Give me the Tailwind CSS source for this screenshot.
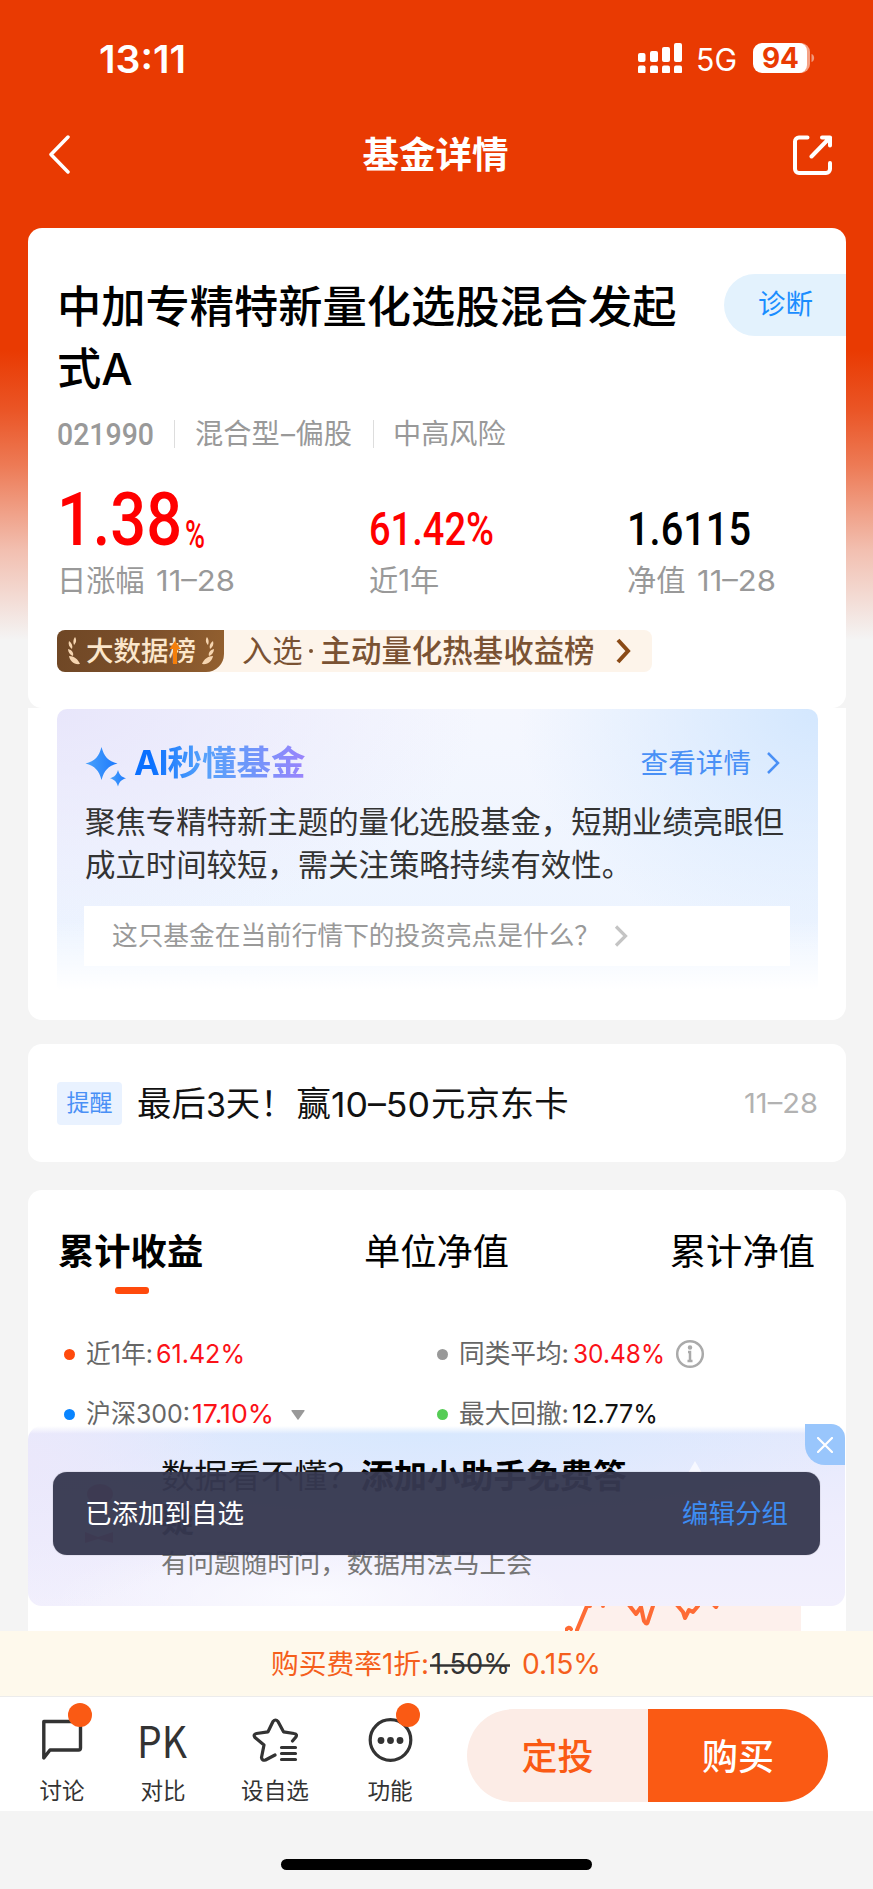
<!DOCTYPE html>
<html lang="zh-CN">
<head>
<meta charset="utf-8">
<title>基金详情</title>
<script src="https://cdn.jsdelivr.net/npm/@tailwindcss/browser@4"></script>
</head>
<body class="bg-[#f4f4f4]">
<div class="relative flex h-[1889px] w-[873px] flex-col overflow-hidden bg-[#f4f4f4] font-['Inter','Noto_Sans_CJK_SC',sans-serif] text-[#111]">
  <main class="h-[1631px] w-full shrink-0 overflow-hidden bg-[linear-gradient(180deg,#e93a02_0px,#e93a02_350px,#ea5526_410px,#ed7a55_465px,#f2bfb0_550px,#f4f4f4_640px)]">
    <!-- status bar -->
    <div class="flex h-[116px] items-center justify-between pl-[100px] pr-[59px]">
      <svg class="h-[40px] w-[88px] overflow-visible" viewBox="0 0 88 40"><text x="-1" y="34.500" textLength="87" lengthAdjust="spacingAndGlyphs" class="fill-white text-[38px] font-semibold">13:11</text></svg>
      <div class="flex items-center">
        <svg class="h-[30px] w-[45px]" viewBox="0 0 45 30" fill="#fff"><rect x="0" y="10" width="7.5" height="9" rx="2"/><rect x="12" y="8" width="8" height="11" rx="2"/><rect x="24" y="4" width="8" height="15" rx="2"/><rect x="36" y="0" width="8" height="19" rx="2"/><rect x="0" y="22.500" width="7.500" height="8" rx="2"/><rect x="12" y="22.500" width="8" height="8" rx="2"/><rect x="24" y="22.500" width="8" height="8" rx="2"/><rect x="36" y="22.500" width="8" height="8" rx="2"/></svg>
        <svg class="ml-[13px] h-[30px] w-[42px] overflow-visible" viewBox="0 0 42 30"><text x="0" y="27.500" textLength="41" lengthAdjust="spacingAndGlyphs" class="fill-white text-[31px]">5G</text></svg>
        <svg class="ml-[15px] mr-[-1px] h-[30px] w-[62px] overflow-visible" viewBox="0 0 62 30"><rect x="3" width="54" height="30" rx="9" fill="#f5a184"/><path d="M9 0H46a8 8 0 0 1 8 8V22a8 8 0 0 1-8 8H9a9 9 0 0 1-9-9V9a9 9 0 0 1 9-9z" fill="#fff"/><path d="M58.500 11c3.500 1 3.500 7 0 8z" fill="#f19a7d"/><text x="9" y="25" textLength="37" lengthAdjust="spacingAndGlyphs" class="fill-[#e93a02] text-[28px] font-bold">94</text></svg>
      </div>
    </div>
    <!-- title bar -->
    <header class="flex h-[112px] items-start justify-between pl-[48px] pr-[40px] pt-[19px]">
      <svg class="h-[40px] w-[39px]" viewBox="0 0 39 40" fill="none" stroke="#fff" stroke-width="3.500" stroke-linecap="round" stroke-linejoin="round"><path d="M20 2 3 19.500 20 37"/></svg>
      <h1 class="-ml-[9px] text-[36.500px] leading-[40px] font-bold text-white">基金详情</h1>
      <svg class="h-[40px] w-[40px]" viewBox="0 0 40 40" fill="none" stroke="#fff" stroke-width="4" stroke-linecap="round" stroke-linejoin="round"><path d="M14.500 2.500H6a4 4 0 0 0-4 4V34a4 4 0 0 0 4 4H33a4 4 0 0 0 4-4V28M29 2.500h8v8M37 2.500 18.500 21.500"/></svg>
    </header>

    <div class="mx-[28px] w-[818px]">
      <!-- fund summary -->
      <section class="h-[480px] rounded-[14px] bg-white pt-[46px]">
        <div class="flex h-[124px] items-start justify-between pl-[29px]">
          <h2 class="mt-[2px] w-[640px] text-[44.250px] leading-[62px] font-medium text-black">中加专精特新量化选股混合发起式A</h2>
          <div class="flex h-[62px] w-[122px] items-center rounded-l-full bg-[#e3f2fd] pl-[34px] text-[27.500px] text-[#1a8dff]">诊断</div>
        </div>
        <div class="mt-[18px] flex h-[36px] items-center pl-[29px] text-[28.200px] leading-[36px] text-[#999]">
          <svg class="h-[36px] w-[98px] overflow-visible" viewBox="0 0 98 36"><text x="0" y="29" textLength="97" lengthAdjust="spacingAndGlyphs" class="fill-[#999] font-[Roboto] text-[32px] font-medium">021990</text></svg>
          <i class="ml-[19px] h-[28px] w-px bg-[#ddd]"></i>
          <span class="ml-[20px] flex">混合型<svg class="h-[36px] w-[16px]" viewBox="0 0 16 36"><text x="1" y="28" textLength="14" lengthAdjust="spacingAndGlyphs" class="fill-[#999]">–</text></svg>偏股</span>
          <i class="ml-[21px] h-[28px] w-px bg-[#ddd]"></i>
          <span class="ml-[19px]">中高风险</span>
        </div>
        <div class="mt-[36px] flex pl-[32px]">
          <div class="w-[309px]">
            <svg class="h-[64px] w-[150px] overflow-visible" viewBox="0 0 150 64"><text x="-3" y="57" textLength="125" lengthAdjust="spacingAndGlyphs" class="fill-[#f00] font-[Roboto] text-[75px] font-medium">1.38</text><text x="125" y="60" textLength="20" lengthAdjust="spacingAndGlyphs" class="fill-[#f00] font-[Roboto] text-[39px] font-medium">%</text></svg>
            <div class="mt-[10px] flex h-[38px] items-center text-[29.200px] text-[#999]"><span class="-ml-[3px]">日涨幅</span><svg class="ml-[11px] h-[38px] w-[80px] overflow-visible" viewBox="0 0 80 38"><text x="0" y="29" textLength="79" lengthAdjust="spacingAndGlyphs" class="fill-[#999] text-[29px]">11–28</text></svg></div>
          </div>
          <div class="w-[259px]">
            <svg class="h-[64px] w-[150px] overflow-visible" viewBox="0 0 150 64"><text x="0" y="57" textLength="125" lengthAdjust="spacingAndGlyphs" class="fill-[#f00] font-[Roboto] text-[46.500px] font-medium">61.42%</text></svg>
            <div class="mt-[10px] flex h-[38px] items-center text-[29.200px] text-[#999]">近<span>1</span>年</div>
          </div>
          <div>
            <svg class="h-[64px] w-[150px] overflow-visible" viewBox="0 0 150 64"><text x="-1" y="57" textLength="124" lengthAdjust="spacingAndGlyphs" class="fill-black font-[Roboto] text-[46.500px] font-medium">1.6115</text></svg>
            <div class="mt-[10px] flex h-[38px] items-center text-[29.200px] text-[#999]"><span class="-ml-px">净值</span><svg class="ml-[12px] h-[38px] w-[80px] overflow-visible" viewBox="0 0 80 38"><text x="0" y="29" textLength="79" lengthAdjust="spacingAndGlyphs" class="fill-[#999] text-[29px]">11–28</text></svg></div>
          </div>
        </div>
        <div class="mt-[30px] ml-[29px] flex h-[42px] w-[595px] items-center rounded-[8px] bg-[#fdf4ea] text-[#7a5233]">
          <div class="relative flex h-[42px] w-[167px] items-center rounded-l-[8px] rounded-br-[18px] bg-[linear-gradient(100deg,#6f4725,#7b4f2b_50%,#93602f)] pl-[10px]">
            <svg class="h-[30px] w-[16px]" viewBox="0 0 16 30" fill="#f6d5b0"><path d="M8 1c2 3 1 6-1 8-1-3-1-5 1-8zM2 5c3 2 4 5 3 8C2 11 1 8 2 5zM1 13c4 1 6 4 5 7-3-1-5-4-5-7zM2 20c5 0 9 3 11 8C7 29 3 25 2 20z"/></svg>
            <span class="ml-[3px] text-[27.500px] leading-[40px] font-medium text-[#fbe6cb]">大数据榜</span>
            <svg class="ml-[3px] h-[30px] w-[16px] -scale-x-100" viewBox="0 0 16 30" fill="#f6d5b0"><path d="M8 1c2 3 1 6-1 8-1-3-1-5 1-8zM2 5c3 2 4 5 3 8C2 11 1 8 2 5zM1 13c4 1 6 4 5 7-3-1-5-4-5-7zM2 20c5 0 9 3 11 8C7 29 3 25 2 20z"/></svg>
            <svg class="absolute left-[111px] top-[11px] h-[24px] w-[14px]" viewBox="0 0 14 24" fill="#f57f0a"><path d="M7 0 12.500 8H9V23H5V8H1.500z"/></svg>
          </div>
          <span class="ml-[18px] text-[30.300px] leading-[40px]">入选</span>
          <i class="ml-[6px] h-[4px] w-[4px] rounded-full bg-[#7a5233]"></i>
          <span class="ml-[8px] text-[30.450px] leading-[40px] font-medium">主动量化热基收益榜</span>
          <svg class="ml-[20px] h-[26px] w-[18px]" viewBox="0 0 18 26" fill="none" stroke="#8a4a16" stroke-width="4"><path d="M3 2 13 13 3 24"/></svg>
        </div>
      </section>

      <!-- AI digest -->
      <section class="h-[312px] rounded-b-[14px] bg-white px-[29px] pt-px">
        <div class="h-[283px] w-[761px] rounded-[10px] bg-[linear-gradient(180deg,rgba(255,255,255,0)_75%,#fff_99%),radial-gradient(ellipse_300px_240px_at_100%_0%,#d3e7fe,rgba(225,239,255,0)),radial-gradient(ellipse_420px_230px_at_0%_0%,#e8e6fb,rgba(240,240,254,0)),linear-gradient(180deg,#f5f7fe,#eaf3ff)] px-[27px] pt-[32px]">
          <div class="flex h-[44px] items-center">
            <svg class="h-[44px] w-[44px] overflow-visible" viewBox="0 0 44 44"><defs><linearGradient id="spark" x1="0" x2="1"><stop offset="0" stop-color="#4aa2fb"/><stop offset="1" stop-color="#1c79fd"/></linearGradient></defs><g fill="url(#spark)"><path d="M17.500 6C20 15.500 24 20 33.500 22.500 24 25 20 29.500 17.500 39 15 29.500 11 25 1.500 22.500 11 20 15 15.500 17.500 6z"/><path d="M34 29c1.500 5 3.500 7 8 8.200-4.500 1.300-6.500 3.300-8 8.300-1.500-5-3.500-7-8-8.300 4.500-1.200 6.500-3.200 8-8.200z"/></g></svg>
            <span class="ml-[6px] bg-[linear-gradient(90deg,#0a70ff_10%,#55a2fb_40%,#6b98fa_65%,#9a84fc)] bg-clip-text text-[34.500px] leading-[44px] font-bold text-transparent"><span class="tracking-[-1px]">AI</span>秒懂基金</span>
            <span class="ml-auto text-[27.600px] leading-[44px] text-[#4990f6]">查看详情</span>
            <svg class="ml-[15px] mr-[11px] h-[24px] w-[14px]" viewBox="0 0 14 24" fill="none" stroke="#4990f6" stroke-width="2.500"><path d="M2 2 12 12 2 22"/></svg>
          </div>
          <p class="mt-[16px] w-[715px] pl-px text-[30.400px] leading-[43px] text-[#333]">聚焦专精特新主题的量化选股基金，短期业绩亮眼但成立时间较短，需关注策略持续有效性。</p>
          <div class="mt-[19px] flex h-[60px] w-[706px] items-center bg-white pl-[28px] text-[25.700px] text-[#999]">这只基金在当前行情下的投资亮点是什么？
            <svg class="ml-[14px] h-[22px] w-[14px]" viewBox="0 0 14 22" fill="none" stroke="#c4c4c4" stroke-width="3.200"><path d="M2 1.500 11.500 11 2 20.500"/></svg>
          </div>
        </div>
      </section>

      <!-- reminder -->
      <section class="mt-[24px] flex h-[118px] items-center rounded-[14px] bg-white pl-[29px] pr-[28px]">
        <span class="flex h-[43px] w-[65px] items-center justify-center rounded-[4px] bg-[#e9f2ff] text-[23px] text-[#4990f6]">提醒</span>
        <span class="ml-[15px] flex items-center pt-[2px] text-[34.400px] leading-[50px]">最后<svg class="h-[50px] w-[20px] overflow-visible" viewBox="0 0 20 50"><text x="0" y="38" textLength="20" lengthAdjust="spacingAndGlyphs" class="fill-[#111] text-[34px]">3</text></svg>天！<span class="ml-[2px]">赢</span><svg class="h-[50px] w-[100px] overflow-visible" viewBox="0 0 100 50"><text x="0" y="38" textLength="99" lengthAdjust="spacingAndGlyphs" class="fill-[#111] text-[34px]">10–50</text></svg>元京东卡</span>
        <svg class="ml-auto h-[40px] w-[74px] overflow-visible" viewBox="0 0 74 40"><text x="0" y="30" textLength="74" lengthAdjust="spacingAndGlyphs" class="fill-[#b2b2b2] text-[27px]">11–28</text></svg>
      </section>

      <!-- performance -->
      <section class="mt-[28px] h-[460px] rounded-t-[14px] bg-white pt-[37px]">
        <div class="flex justify-between pl-[30px] pr-[31px] text-[36.300px] leading-[50px] text-black">
          <div class="flex flex-col items-center"><span class="font-bold">累计收益</span><i class="mt-[10px] ml-[2px] h-[7px] w-[34px] rounded-[3px] bg-[#ff4a0c]"></i></div>
          <span>单位净值</span>
          <span>累计净值</span>
        </div>
        <div class="mt-[30px] grid grid-cols-[373px_1fr] pl-[36px] text-[26px] leading-[60px] text-[#666]">
          <div class="flex items-center"><i class="mr-[11px] h-[11px] w-[11px] rounded-full bg-[#ff4a0c]"></i><svg class="h-[60px] w-[160px] overflow-visible" viewBox="0 0 160 60"><text y="39" textLength="67" lengthAdjust="spacingAndGlyphs" class="fill-[#666]">近1年:</text><text x="70" y="39" textLength="89" lengthAdjust="spacingAndGlyphs" class="fill-[#fb1218]">61.42%</text></svg></div>
          <div class="flex items-center"><i class="mr-[11px] h-[11px] w-[11px] rounded-full bg-[#999]"></i><svg class="h-[60px] w-[206px] overflow-visible" viewBox="0 0 206 60"><text y="39" textLength="110" lengthAdjust="spacingAndGlyphs" class="fill-[#666]">同类平均:</text><text x="114" y="39" textLength="92" lengthAdjust="spacingAndGlyphs" class="fill-[#fb1218]">30.48%</text></svg><svg class="ml-[10px] h-[30px] w-[30px]" viewBox="0 0 30 30" fill="none" stroke="#aaa" stroke-width="2.500"><circle cx="15" cy="15" r="12.800"/><path d="M13 13H15v9M12.500 22h5"/><circle cx="15" cy="8.500" r="1" fill="#aaa"/></svg></div>
          <div class="flex items-center"><i class="mr-[11px] h-[11px] w-[11px] rounded-full bg-[#0a85ff]"></i><svg class="h-[60px] w-[190px] overflow-visible" viewBox="0 0 190 60"><text y="39" textLength="104" lengthAdjust="spacingAndGlyphs" class="fill-[#666]">沪深300:</text><text x="106" y="39" textLength="82" lengthAdjust="spacingAndGlyphs" class="fill-[#fb1218]">17.10%</text></svg><svg class="ml-[15px] mt-[2px] h-[10px] w-[14px]" viewBox="0 0 14 10" fill="#999"><path d="M1 0H13Q14 0 13.500 1L7.500 9.500Q7 10 6.500 9.500L.5 1Q0 0 1 0z"/></svg></div>
          <div class="flex items-center"><i class="mr-[11px] h-[11px] w-[11px] rounded-full bg-[#55cc55]"></i><svg class="h-[60px] w-[206px] overflow-visible" viewBox="0 0 206 60"><text y="39" textLength="110" lengthAdjust="spacingAndGlyphs" class="fill-[#666]">最大回撤:</text><text x="113" y="39" textLength="86" lengthAdjust="spacingAndGlyphs" class="fill-[#111]">12.77%</text></svg></div>
        </div>
        <svg class="mt-[162px] ml-[537px] h-[30px] w-[240px]" viewBox="0 0 240 30"><path d="M12 30 22 0H236V30z" fill="#fdf0ec"/><path d="M1 24Q4 20 6 23M12 24 22 0H25M38-1v1M64-1l7 9 5-7 3 14q3 5 4 0l6-18M112-1l6 7 2 6 4-8 4 2 5-6M149-1l2 2 1-2" fill="none" stroke="#fe6b35" stroke-width="4" stroke-linejoin="round" stroke-linecap="round"/></svg>
      </section>
    </div>
  </main>

  <!-- assistant banner -->
  <aside class="absolute left-[28px] top-[1426px] h-[180px] w-[817px] rounded-[14px] bg-[linear-gradient(180deg,#fff_0px,rgba(255,255,255,0)_8px),radial-gradient(ellipse_200px_150px_at_0%_20%,#ebe8fb,rgba(235,232,251,0)),radial-gradient(ellipse_260px_60px_at_35%_95%,#fafaff,rgba(250,250,255,0)),radial-gradient(ellipse_460px_110px_at_48%_0%,#d7e8fe,rgba(224,235,254,0)),linear-gradient(180deg,#e4e9fd,#eeedfd_50%,#f2f0fd)] pl-[133px] pt-[28px]">
    <p class="text-[33.250px] leading-[44px] whitespace-nowrap text-[#111]">数据看不懂？<b class="font-bold text-black">添加小助手免费答</b></p>
    <b class="block text-[33px] leading-[44px]">疑</b>
    <p class="text-[26.550px] leading-[42px] text-[#777]">有问题随时问，数据用法马上会</p>
    <svg class="absolute left-[52px] top-[50px] h-[70px] w-[40px] opacity-60" viewBox="0 0 40 70" fill="#e0242c"><ellipse cx="20" cy="18" rx="13" ry="10"/><path d="M5 56l13 5 15-5v11l-15-4-13 4z"/></svg>
    <svg class="absolute left-[660px] top-[34px] h-[14px] w-[14px]" viewBox="0 0 16 14" fill="#f7f8ff"><path d="M8 0 16 14H0z"/></svg>
    <div class="absolute -top-[2px] right-0 flex h-[41px] w-[40px] items-center justify-center rounded-tr-[14px] rounded-bl-[20px] bg-[#99c6fc]"><svg class="h-[16px] w-[16px]" viewBox="0 0 16 16" fill="none" stroke="#fff" stroke-width="2.200" stroke-linecap="round"><path d="M1 1 15 15M15 1 1 15"/></svg></div>
  </aside>

  <!-- toast -->
  <div class="absolute left-[53px] top-[1472px] flex h-[83px] w-[767px] items-center justify-between rounded-[14px] bg-[#363850]/96 pt-px pl-[32px] pr-[32px] text-[26.500px] text-white shadow-[0_0_1px_#777]"><span>已添加到自选</span><span class="text-[#3d8cf2]">编辑分组</span></div>

  <!-- fee -->
  <div class="flex h-[65px] shrink-0 items-center bg-[#fef9ec] pl-[271px] text-[27.800px] text-[#f55f1c]">
    <svg class="h-[60px] w-[335px] overflow-visible" viewBox="0 0 335 60"><text y="40" textLength="158" lengthAdjust="spacingAndGlyphs" class="fill-[#f55f1c]">购买费率1折:</text><text x="160" y="40" textLength="79" lengthAdjust="spacingAndGlyphs" class="fill-[#333]">1.50%</text><path d="M159 31.500H239" stroke="#333" stroke-width="2.500"/><text x="251" y="40" textLength="79" lengthAdjust="spacingAndGlyphs" class="fill-[#f55f1c]">0.15%</text></svg>
  </div>

  <!-- toolbar -->
  <nav class="flex h-[115px] shrink-0 border-t border-[#ececec] bg-white pt-[12px] text-[22.600px] leading-[30px] text-[#333]">
    <div class="relative ml-[30px] flex w-[64px] flex-col items-center">
      <svg class="mt-[9px] h-[44px] w-[44px]" viewBox="0 0 44 44" fill="none" stroke="#333" stroke-width="3.400" stroke-linejoin="round"><path d="M3.800 3.500H38.500a2 2 0 0 1 2 2V30a2 2 0 0 1-2 2H10L3.800 40z"/></svg>
      <span class="mt-[14px]">讨论</span>
      <i class="absolute left-[38px] -top-[6px] h-[24px] w-[24px] rounded-full bg-[#fa5a14]"></i>
    </div>
    <div class="ml-[37px] flex w-[64px] flex-col items-center">
      <svg class="mt-[9px] h-[44px] w-[48px] overflow-visible" viewBox="0 0 48 44"><text x="-2" y="40" textLength="50" lengthAdjust="spacingAndGlyphs" class="fill-[#333] font-['Noto_Sans_CJK_SC'] text-[44px]">PK</text></svg>
      <span class="mt-[14px]">对比</span>
    </div>
    <div class="ml-[40px] flex w-[80px] flex-col items-center">
      <svg class="mt-[9px] h-[44px] w-[46px]" viewBox="0 0 46 44" fill="none" stroke="#333" stroke-width="3.200" stroke-linecap="round" stroke-linejoin="round"><path d="M40.500 23 43.500 19.500Q46 16 42 15.500L31.500 13.800 26 3.500Q23.500.500 21 3.500L16 13.800 4.500 15.500Q.700 16.500 3 19.500L12 27 9.500 39.500Q10 43 13.500 42L23 37"/><path d="M29.500 29.500H43.500M29.500 35.500H43.500M29.500 41.500H43.500"/></svg>
      <span class="mt-[14px]">设自选</span>
    </div>
    <div class="relative ml-[43px] flex w-[64px] flex-col items-center">
      <svg class="mt-[9px] h-[44px] w-[45px]" viewBox="0 0 45 44"><circle cx="22.500" cy="22" r="20.300" fill="none" stroke="#333" stroke-width="3.200"/><g fill="#333"><circle cx="13" cy="22.500" r="3.400"/><circle cx="22.500" cy="22.500" r="3.400"/><circle cx="32" cy="22.500" r="3.400"/></g></svg>
      <span class="mt-[14px]">功能</span>
      <i class="absolute left-[38px] -top-[6px] h-[24px] w-[24px] rounded-full bg-[#fa5a14]"></i>
    </div>
    <div class="ml-[45px] flex h-[93px] w-[361px] overflow-hidden rounded-full text-[36px] leading-[96px] font-medium">
      <span class="w-[181px] bg-[#fcece6] text-center text-[#fa5a14]">定投</span>
      <span class="w-[180px] bg-[#fa5a14] text-center text-white">购买</span>
    </div>
  </nav>
  <div class="flex h-[78px] shrink-0 justify-center pt-[48px]"><i class="h-[11px] w-[311px] rounded-full bg-black"></i></div>
</div>
</body>
</html>
